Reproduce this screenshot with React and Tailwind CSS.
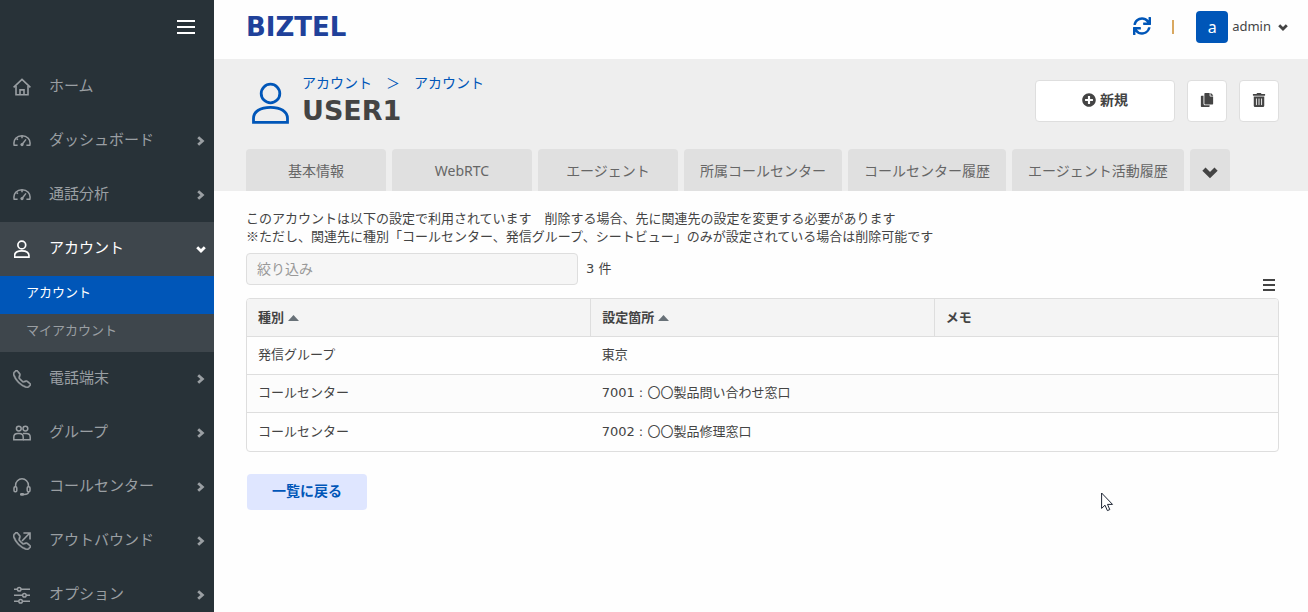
import { useState } from "react";

import { BsTelephone } from "react-icons/bs";
import { FaCopy, FaPlusCircle, FaSync, FaTrashAlt } from "react-icons/fa";

import clsx from "clsx";

/* ---------- icons ---------- */

function HomeIcon() {
  return (
    <svg viewBox="0 0 18 18" className="h-[18px] w-[18px]" fill="none" stroke="currentColor" strokeWidth="1.6" aria-hidden="true">
      <path d="M0.6 9.4 9 1.4l8.4 8" />
      <path d="M3 8v8.8h12V8" />
      <path d="M7 16.5v-4.6h4v4.6" />
    </svg>
  );
}

function GaugeIcon() {
  return (
    <svg viewBox="0 0 18 18" className="h-[18px] w-[18px]" fill="none" stroke="currentColor" strokeWidth="1.5" aria-hidden="true">
      <path d="M4.6 13.3H1.2C-.2 7.6 4.2 3.7 9 3.7s9.2 3.9 7.8 9.6h-3.4" />
      <path d="M9 4v2.2M3.6 6.6l1.3 1.2" />
      <path d="M9.2 12.2 13 7.4" />
      <circle cx="9" cy="12.6" r="1.6" fill="currentColor" stroke="none" />
    </svg>
  );
}

function UserIcon({ className, strokeWidth }) {
  return (
    <svg viewBox="0 0 38 42" className={className} fill="none" stroke="currentColor" strokeWidth={strokeWidth} aria-hidden="true">
      <circle cx="18.5" cy="11.5" r="9.3" />
      <path d="M1.5 40.3v-3.8c0-7.2 7-11.2 17-11.2s17 4 17 11.2v3.8z" />
    </svg>
  );
}

function GroupIcon() {
  return (
    <svg viewBox="0 0 18 18" className="h-[18px] w-[18px]" fill="none" stroke="currentColor" strokeWidth="1.5" aria-hidden="true">
      <circle cx="5.8" cy="4.6" r="2.4" />
      <circle cx="12.4" cy="4.6" r="2.4" />
      <path d="M.8 15.8v-2.6c0-2 1.6-3.6 4-3.6h1.4c2.4 0 4 1.6 4 3.6v2.6z" />
      <path d="M10 9.6h3.2c2.4 0 4 1.6 4 3.6v2.6h-7" />
    </svg>
  );
}

function HeadsetIcon() {
  return (
    <svg viewBox="0 0 18 18" className="h-[18px] w-[18px]" fill="none" stroke="currentColor" strokeWidth="1.5" aria-hidden="true">
      <path d="M2.6 9V7.2a6.4 6.4 0 0 1 12.8 0V9" />
      <rect x="1" y="8.8" width="2.8" height="5" rx="1.2" />
      <rect x="14.2" y="8.8" width="2.8" height="5" rx="1.2" />
      <path d="M15.6 13.8c0 1.6-1.6 2.7-4.6 2.7" />
      <rect x="7" y="15" width="4.2" height="2.8" rx="1.3" fill="currentColor" stroke="none" />
    </svg>
  );
}

function OutboundIcon() {
  return (
    <span className="relative block h-[18px] w-[18px]">
      <BsTelephone size={18} stroke="currentColor" strokeWidth={0.5} />
      <svg viewBox="0 0 18 18" className="absolute inset-0 h-[18px] w-[18px]" fill="none" stroke="currentColor" strokeWidth="1.6" aria-hidden="true">
        <path d="M9 9l7.6-7.8M10.4 1H17v6.6" />
      </svg>
    </span>
  );
}

function SlidersIcon() {
  return (
    <svg viewBox="0 0 18 18" className="h-[18px] w-[18px]" fill="none" stroke="currentColor" strokeWidth="1.5" aria-hidden="true">
      <path d="M1 3.2h3.6M8 3.2h9M1 9.2h8.6M13 9.2h4M1 15.2h4.8M9.4 15.2H17" />
      <circle cx="6.2" cy="3.2" r="1.8" />
      <circle cx="11.4" cy="9.2" r="1.8" />
      <circle cx="7.6" cy="15.2" r="1.8" />
    </svg>
  );
}

function Chevron({ direction = "right", className = "h-[10px] w-[10px]" }) {
  return (
    <svg viewBox="0 0 10 10" className={className} fill="none" stroke="currentColor" strokeWidth="2.8" aria-hidden="true">
      {direction === "right" ? <path d="M2.2 1.2 6.4 5 2.2 8.8" /> : <path d="M1.2 3.2 5 7l3.8-3.8" />}
    </svg>
  );
}

function MouseCursor() {
  return (
    <svg viewBox="0 0 13 20" className="absolute top-[492px] left-[1101px] h-5 w-[13px]" aria-hidden="true">
      <path d="M.6 1v15.4l3.4-3.2 2.4 5.4 2.4-1-2.3-5.2h5z" fill="#fff" stroke="#1d2433" strokeWidth="1" />
    </svg>
  );
}

/* ---------- data ---------- */

const MENU = [
  { label: "ホーム", icon: <HomeIcon /> },
  { label: "ダッシュボード", icon: <GaugeIcon />, expandable: true },
  { label: "通話分析", icon: <GaugeIcon />, expandable: true },
  {
    label: "アカウント",
    icon: <UserIcon className="mx-px h-[18px] w-4" strokeWidth={4} />,
    expandable: true,
    children: ["アカウント", "マイアカウント"],
  },
  {
    label: "電話端末",
    icon: <BsTelephone size={18} stroke="currentColor" strokeWidth={0.5} />,
    expandable: true,
  },
  { label: "グループ", icon: <GroupIcon />, expandable: true },
  { label: "コールセンター", icon: <HeadsetIcon />, expandable: true },
  { label: "アウトバウンド", icon: <OutboundIcon />, expandable: true },
  { label: "オプション", icon: <SlidersIcon />, expandable: true },
];

const TABS = [
  "基本情報",
  "WebRTC",
  "エージェント",
  "所属コールセンター",
  "コールセンター履歴",
  "エージェント活動履歴",
];

const ROWS = [
  { type: "発信グループ", place: "東京", memo: "" },
  { type: "コールセンター", place: "7001 : 〇〇製品問い合わせ窓口", memo: "" },
  { type: "コールセンター", place: "7002 : 〇〇製品修理窓口", memo: "" },
];

/* ---------- parts ---------- */

function Sidebar() {
  const [opened, setOpened] = useState("アカウント");

  return (
    <aside className="sticky top-0 h-screen w-[214px] shrink-0 overflow-hidden bg-[#283238] text-[#9a9fa3]">
      <div className="flex h-[60px] items-center justify-end px-[19px] pb-1.5">
        <button type="button" aria-label="メニュー" className="flex w-[18px] flex-col gap-1">
          <span className="h-0.5 w-full bg-white" />
          <span className="h-0.5 w-full bg-white" />
          <span className="h-0.5 w-full bg-white" />
        </button>
      </div>
      <nav>
        <ul>
          {MENU.map((item) => {
            const isOpen = Boolean(item.children) && opened === item.label;
            return (
              <li key={item.label}>
                <button
                  type="button"
                  onClick={() => setOpened(isOpen ? "" : item.label)}
                  className={clsx(
                    "flex h-[54px] w-full items-center pr-2 pl-[13px] text-left text-[15px]",
                    isOpen && "bg-[#3e464c] text-white"
                  )}
                >
                  <span className="w-9 shrink-0">{item.icon}</span>
                  <span className="flex-1 pb-1">{item.label}</span>
                  {item.expandable && <Chevron direction={isOpen ? "down" : "right"} />}
                </button>
                {isOpen && (
                  <ul>
                    {item.children.map((child, i) => (
                      <li key={child}>
                        <a
                          href="#"
                          className={clsx(
                            "flex h-[38px] items-center pb-1 pl-[26px] text-[13px]",
                            i === 0 ? "bg-[#0056b8] text-white" : "bg-[#3e464c]"
                          )}
                        >
                          {child}
                        </a>
                      </li>
                    ))}
                  </ul>
                )}
              </li>
            );
          })}
        </ul>
      </nav>
    </aside>
  );
}

function TopBar() {
  return (
    <header className="flex h-[59px] items-center justify-between pr-5 pb-[5px] pl-8">
      <a href="#" className="font-['DejaVu_Sans',sans-serif] text-[26px] leading-8 font-bold text-[#20419a]">
        BIZTEL
      </a>
      <div className="flex items-center">
        <button type="button" aria-label="更新" className="pb-0.5 text-[#0056b8]">
          <FaSync size={18} />
        </button>
        <span className="mr-[22px] ml-[21px] h-3.5 w-0.5 bg-[#d9a860]" />
        <button type="button" className="flex items-center text-[13px] text-[#444]">
          <span className="mr-1 flex h-8 w-8 items-center justify-center rounded bg-[#0056b8] text-base text-white">a</span>
          admin
          <Chevron direction="down" className="ml-[7px] h-[10px] w-[10px]" />
        </button>
      </div>
    </header>
  );
}

function PageHeader() {
  const buttonStyle = "flex h-[42px] items-center justify-center rounded border border-[#dedede] bg-white pb-0.5";

  return (
    <div className="bg-[#eee] pr-[29px] pl-8">
      <div className="flex items-center pt-3.5 pb-5">
        <UserIcon className="mt-1 mr-3 ml-1.5 h-[42px] w-[38px] text-[#0056b8]" strokeWidth={2.8} />
        <div className="flex-1">
          <div className="flex gap-3.5 text-sm leading-5 text-[#0056b8]">
            <a href="#">アカウント</a>
            <span>＞</span>
            <a href="#">アカウント</a>
          </div>
          <h1 className="font-['DejaVu_Sans',sans-serif] text-[27px] leading-9 font-bold">USER1</h1>
        </div>
        <div className="flex gap-3">
          <button type="button" className={clsx(buttonStyle, "w-[140px] gap-1 text-sm font-bold")}>
            <FaPlusCircle size={14} />
            新規
          </button>
          <button type="button" aria-label="コピー" className={clsx(buttonStyle, "w-10")}>
            <FaCopy size={14} />
          </button>
          <button type="button" aria-label="削除" className={clsx(buttonStyle, "w-10")}>
            <FaTrashAlt size={14} />
          </button>
        </div>
      </div>
      <div className="flex gap-1.5">
        {TABS.map((tab) => (
          <button
            key={tab}
            type="button"
            className="h-[42px] min-w-[140px] rounded-t bg-[#e0e0e0] px-4 pt-0.5 text-sm whitespace-nowrap text-[#666]"
          >
            {tab}
          </button>
        ))}
        <button type="button" aria-label="その他" className="flex h-[42px] w-10 items-center justify-center rounded-t bg-[#e0e0e0] pt-1">
          <Chevron direction="down" className="h-4 w-4" />
        </button>
      </div>
    </div>
  );
}

function HeadCell({ children, sortable }) {
  return (
    <th className="h-[37px] w-1/3 border-r border-[#dedede] px-[11px] text-left font-bold last:border-r-0">
      <span className="flex items-center gap-1">
        {children}
        {sortable && (
          <svg viewBox="0 0 11 6" className="mt-0.5 h-1.5 w-[11px]" aria-hidden="true">
            <path d="M5.5 0 11 6H0z" fill="#687178" />
          </svg>
        )}
      </span>
    </th>
  );
}

function UsageTable() {
  return (
    <div className="mt-[7px] overflow-hidden rounded border border-[#dedede] pb-px">
      <table className="w-full table-fixed border-collapse text-[13px]">
        <thead className="bg-[#f4f4f4]">
          <tr>
            <HeadCell sortable>種別</HeadCell>
            <HeadCell sortable>設定箇所</HeadCell>
            <HeadCell>メモ</HeadCell>
          </tr>
        </thead>
        <tbody>
          {ROWS.map((row) => (
            <tr key={row.place} className="border-t border-[#dedede] even:bg-[#fcfcfc]">
              <td className="h-[38px] px-[11px]">{row.type}</td>
              <td className="px-[11px] font-['DejaVu_Sans','Noto_Sans_CJK_JP',sans-serif]">{row.place}</td>
              <td className="px-[11px]">{row.memo}</td>
            </tr>
          ))}
        </tbody>
      </table>
    </div>
  );
}

export default function App() {
  const [keyword, setKeyword] = useState("");

  return (
    <div className="relative flex min-h-screen bg-[#fefefe] font-['Noto_Sans','Noto_Sans_CJK_JP',sans-serif] text-[#444]">
      <Sidebar />
      <div className="min-w-0 flex-1">
        <TopBar />
        <PageHeader />
        <main className="pt-[18px] pr-[29px] pl-8">
          <p className="font-['Noto_Sans_CJK_JP',sans-serif] text-[13px] leading-[18px]">
            このアカウントは以下の設定で利用されています　削除する場合、先に関連先の設定を変更する必要があります
            <br />
            ※ただし、関連先に種別「コールセンター、発信グループ、シートビュー」のみが設定されている場合は削除可能です
          </p>
          <div className="mt-2 flex h-[38px] items-start">
            <input
              type="text"
              aria-label="絞り込み"
              placeholder="絞り込み"
              value={keyword}
              onChange={(e) => setKeyword(e.target.value)}
              className="h-8 w-[332px] rounded-sm border border-[#dedede] bg-[#f6f6f6] px-2.5 pb-0.5 text-sm placeholder:text-[#999]"
            />
            <span className="ml-2 flex-1 font-['DejaVu_Sans','Noto_Sans_CJK_JP',sans-serif] text-[13px] leading-8">3 件</span>
            <button type="button" aria-label="表示項目" className="mr-1 flex w-3 flex-col gap-[3px] self-end">
              <span className="h-0.5 w-full bg-[#444]" />
              <span className="h-0.5 w-full bg-[#444]" />
              <span className="h-0.5 w-full bg-[#444]" />
            </button>
          </div>
          <UsageTable />
          <button type="button" className="mt-[22px] ml-px h-9 w-[120px] rounded-sm bg-[#dfe6ff] pb-0.5 text-sm font-bold text-[#0056b8]">
            一覧に戻る
          </button>
        </main>
      </div>
      <MouseCursor />
    </div>
  );
}
